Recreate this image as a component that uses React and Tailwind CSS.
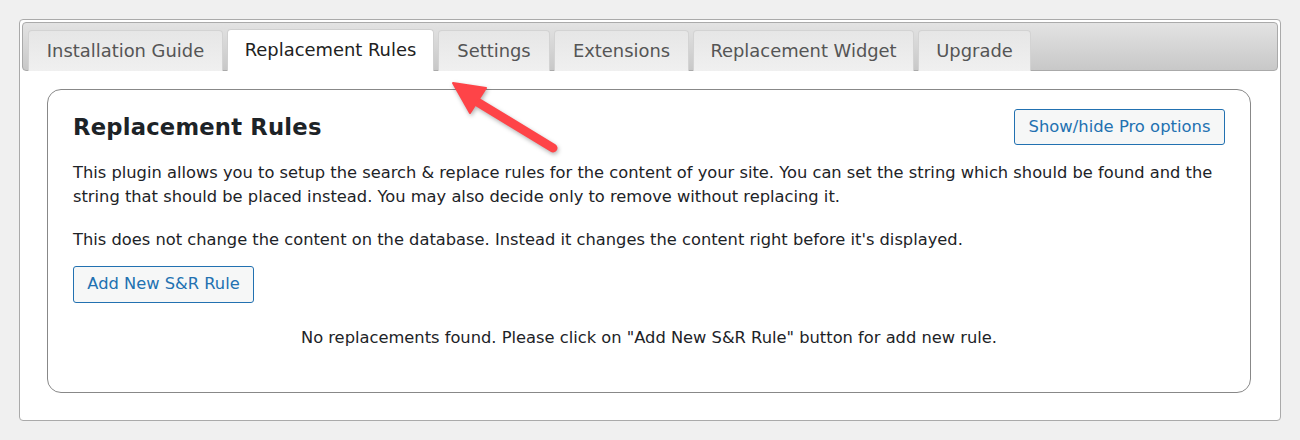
import React from "react";

const tabs = [
  { label: "Installation Guide", w: "w-[195px]" },
  { label: "Replacement Rules", w: "w-[207px]", active: true },
  { label: "Settings", w: "w-[112px]" },
  { label: "Extensions", w: "w-[135px]" },
  { label: "Replacement Widget", w: "w-[221px]" },
  { label: "Upgrade", w: "w-[113px]" },
];

export default function App() {
  return (
    <div className="relative w-[1300px] h-[440px] bg-[#f0f0f0] pt-[19px] pl-[19px] font-['DejaVu_Sans',Verdana,sans-serif]">
      <div className="w-[1262px] h-[402px] bg-white border border-[#aaaaaa] rounded-[4px] p-[2px] flex flex-col">
        <div className="h-[49px] border border-[#aaaaaa] rounded-[4px] bg-gradient-to-b from-[#e3e3e3] to-[#c8c8c8] flex items-end pl-[5px] gap-[4px] w-[1256px]">
          {tabs.map((t) => (
            <div
              key={t.label}
              className={
                t.active
                  ? `${t.w} h-[42px] -mb-px bg-white border border-b-0 border-[#d0d0d0] rounded-t-[4px] flex items-center justify-center text-[17.9px] text-[#212121] whitespace-nowrap`
                  : `${t.w} h-[41px] -mb-px bg-gradient-to-b from-[#e6e6e6] to-[#f0f0f0] border border-b-0 border-[#d3d3d3] rounded-t-[4px] flex items-center justify-center text-[17.9px] text-[#555555] whitespace-nowrap`
              }
            >
              {t.label}
            </div>
          ))}
        </div>
        <div className="pt-[18px] pl-[25px]">
          <div className="w-[1204px] h-[304px] border border-[#888888] rounded-[14px] px-[25px] pt-[19px] text-[#1d2327]">
            <div className="flex items-start justify-between">
              <h2 className="text-[22.7px] font-bold mt-[5px] leading-[26px] tracking-[0.2px]">Replacement Rules</h2>
              <button className="w-[211px] h-[36px] border border-[#2271b1] bg-[#f6f7f7] text-[#2271b1] rounded-[3px] text-[16.4px] whitespace-nowrap">
                Show/hide Pro options
              </button>
            </div>
            <p className="w-[1165px] mt-[16px] text-[16.3px] leading-[23.5px]">
              This plugin allows you to setup the search &amp; replace rules for the content of your site. You can set the string which should be found and the string that should be placed instead. You may also decide only to remove without replacing it.
            </p>
            <p className="mt-[20px] text-[16.3px] leading-[23.5px]">
              This does not change the content on the database. Instead it changes the content right before it's displayed.
            </p>
            <button className="mt-[14px] w-[181px] h-[37px] border border-[#2271b1] bg-[#f6f7f7] text-[#2271b1] rounded-[3px] text-[16.3px] whitespace-nowrap">
              Add New S&amp;R Rule
            </button>
            <p className="mt-[23px] text-center text-[16.3px] leading-[23.5px]">
              No replacements found. Please click on "Add New S&amp;R Rule" button for add new rule.
            </p>
          </div>
        </div>
      </div>
      <svg
        className="absolute left-0 top-0 pointer-events-none"
        width="1300"
        height="440"
        style={{ filter: "drop-shadow(1px 2px 2px rgba(0,0,0,0.3))" }}
      >
        <line x1="474" y1="100" x2="553" y2="148" stroke="#fe4448" strokeWidth="9" strokeLinecap="round" />
        <polygon points="453,83 486,88 470,113" fill="#fe4448" stroke="#fe4448" strokeWidth="2" strokeLinejoin="round" />
      </svg>
    </div>
  );
}
